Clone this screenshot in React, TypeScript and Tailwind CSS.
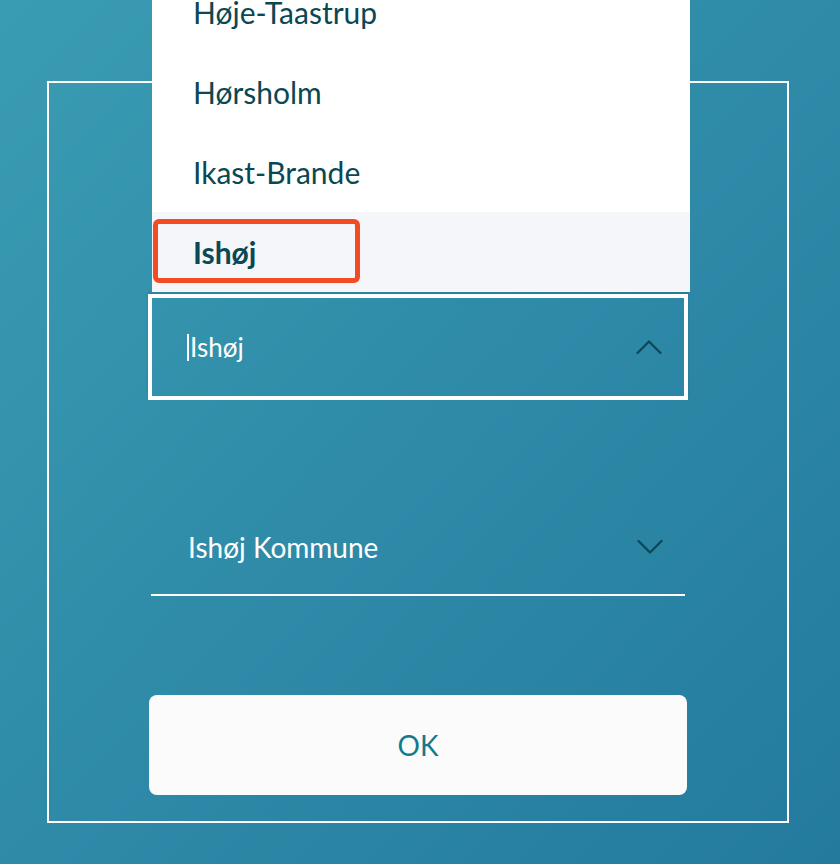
import React from 'react';

const kommuner = ['Høje-Taastrup', 'Hørsholm', 'Ikast-Brande', 'Ishøj'];

function Chevron({ up }: { up?: boolean }) {
    return (
        <svg width="26" height="16" viewBox="0 0 26 16" fill="none" className="shrink-0">
            <path
                d={up ? 'M1.5 14 L13 2.5 L24.5 14' : 'M1.5 2 L13 13.5 L24.5 2'}
                stroke="#0c4654"
                strokeWidth="2.2"
                strokeLinecap="round"
                strokeLinejoin="round"
            />
        </svg>
    );
}

export default function App() {
    const selected = 'Ishøj';

    return (
        <div
            className="w-full min-h-screen h-[864px] overflow-hidden bg-gradient-to-br from-[#3a9cb3] to-[#237a9d]"
            style={{ fontFamily: 'Lato, "Open Sans", sans-serif' }}
        >
            <div className="pl-[47px] pt-[81px]">
                {/* Frame */}
                <div className="w-[742px] h-[742px] border-2 border-white px-[99px] pt-[211px] flex flex-col">
                    {/* Combobox */}
                    <div className="relative">
                        <ul className="absolute left-[4px] bottom-[calc(100%+2px)] w-[538px] bg-white">
                            {kommuner.map(k => {
                                const isSel = k === selected;
                                return (
                                    <li
                                        key={k}
                                        className={`relative h-[80px] flex items-center pl-[41px] text-[30px] text-[#0a4853] ${isSel ? 'bg-[#f4f6fa] font-bold' : ''}`}
                                    >
                                        {k}
                                        {isSel && (
                                            <span className="absolute left-[1px] top-[7px] w-[207px] h-[64px] border-[5px] border-[#f34b23] rounded-[6px]" />
                                        )}
                                    </li>
                                );
                            })}
                        </ul>
                        <div className="h-[106px] border-4 border-white flex items-center pl-[35px] pr-[22px] shadow-[0_-2px_3px_rgba(0,0,0,0.12)]">
                            <span className="w-[2px] h-[27px] bg-white mr-[1px]" />
                            <span className="flex-1 text-[26px] text-white">{selected}</span>
                            <Chevron up />
                        </div>
                    </div>

                    {/* Municipality select */}
                    <div className="mt-[116px] mx-[3px] h-[80px] border-b-2 border-white flex items-center pb-[16px] pl-[37px] pr-[22px]">
                        <span className="flex-1 text-[28px] text-white">Ishøj Kommune</span>
                        <Chevron />
                    </div>

                    <button className="mt-[99px] mx-[1px] h-[100px] rounded-lg bg-[#fbfbfb] text-[28px] text-[#137a8b]">
                        OK
                    </button>
                </div>
            </div>
        </div>
    );
}
